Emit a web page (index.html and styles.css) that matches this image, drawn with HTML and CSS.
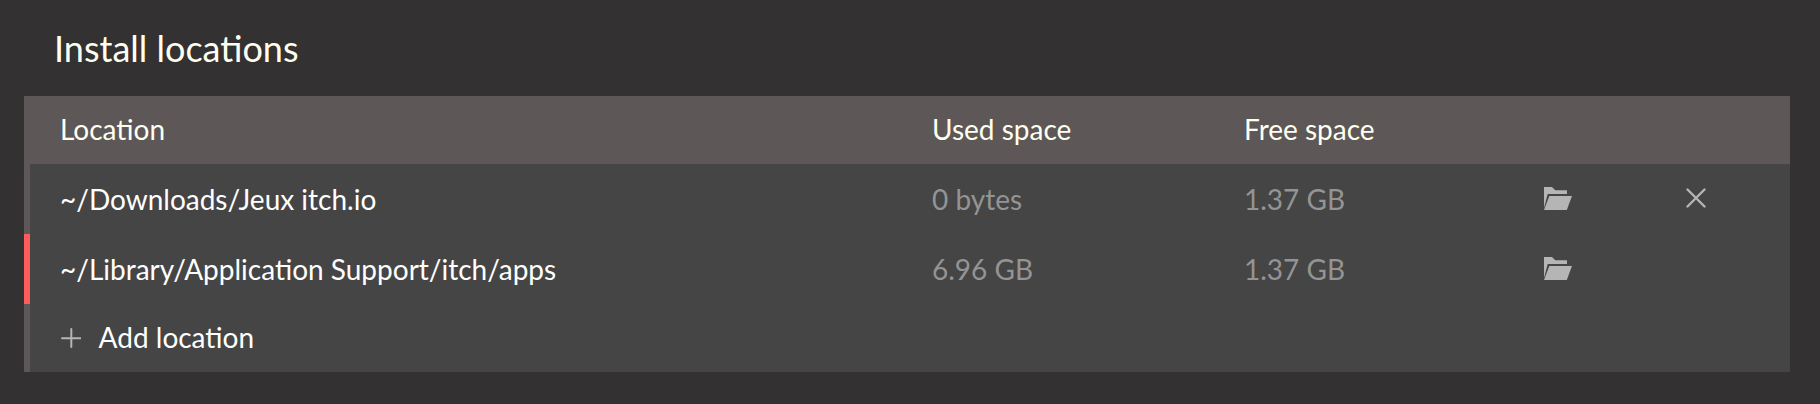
FILE: index.html
```html
<!DOCTYPE html>
<html lang="en">
<head>
    <meta charset="UTF-8">
    <meta name="viewport" content="width=device-width, initial-scale=1.0">
    <title>Install locations</title>
    <link rel="stylesheet" href="styles.css">
</head>
<body>
    <h2>Install locations</h2>
    <table class="locations">
        <tr class="header">
            <th class="path">Location</th>
            <th class="used">Used space</th>
            <th class="free">Free space</th>
            <th class="open"></th>
            <th class="remove"></th>
        </tr>
        <tr>
            <td class="path">~/Downloads/Jeux itch.io</td>
            <td class="space">0 bytes</td>
            <td class="space">1.37 GB</td>
            <td class="action">
                <svg class="icon folder" viewBox="0 0 28 23"><path d="M0 21V0h8l3.300 3.300H23V7H3.700z"/><path d="M5.300 9H28l-5.200 14H0z"/></svg>
            </td>
            <td class="action">
                <svg class="icon cross" viewBox="0 0 20 20"><path d="M1.500 1.500l17 17M18.500 1.500l-17 17"/></svg>
            </td>
        </tr>
        <tr class="default">
            <td class="path">~/Library/Application Support/itch/apps</td>
            <td class="space">6.96 GB</td>
            <td class="space">1.37 GB</td>
            <td class="action">
                <svg class="icon folder" viewBox="0 0 28 23"><path d="M0 21V0h8l3.300 3.300H23V7H3.700z"/><path d="M5.300 9H28l-5.200 14H0z"/></svg>
            </td>
            <td></td>
        </tr>
        <tr class="add">
            <td class="path" colspan="5">
                <div class="link">
                    <svg class="icon plus" viewBox="0 0 20 20"><path d="M10.300 1v18M1 10.300h18.500"/></svg>
                    <span>Add location</span>
                </div>
            </td>
        </tr>
    </table>
</body>
</html>
```
FILE: styles.css
```css
*{
    margin: 0;
    padding: 0;
    box-sizing: border-box;
}
body{
    height: 404px;
    background: #333131;
    color: #fffff0;
    font-family: Lato, sans-serif;
    font-size: 28px;
    overflow: hidden;
}
h2{
    height: 96px;
    padding-left: 54px;
    font-size: 36px;
    font-weight: 400;
    line-height: 96px;
}
.locations{
    width: 1766px;
    margin-left: 24px;
    table-layout: fixed;
    border-collapse: separate;
    border-spacing: 0;
    background: #454545;
}
.locations tr{
    height: 70px;
}
.locations th,
.locations td{
    text-align: left;
    font-weight: 400;
    white-space: nowrap;
}
.locations td{
    color: #fff;
}
.header{
    background: #5d5757;
}
.locations .header{
    height: 68px;
}
.locations .header th{
    padding-bottom: 2px;
}
.locations .path{
    width: 908px;
    padding-left: 30px;
    border-left: 6px solid #5d5757;
}
.locations .default .path{
    border-left-color: #ff5c5c;
}
.used{
    width: 312px;
}
.free{
    width: 300px;
}
.open{
    width: 142px;
}
.locations .space{
    color: #949494;
}
.icon{
    display: block;
    fill: none;
    stroke: #b5b5b5;
    stroke-width: 2;
    stroke-linecap: round;
}
.folder{
    width: 28px;
    height: 23px;
    margin-bottom: 1px;
    fill: #b5b5b5;
    stroke: none;
}
.cross,
.plus{
    width: 20px;
    height: 20px;
}
.cross{
    stroke-width: 2.4;
    margin-bottom: 2px;
}
.plus{
    margin-top: 2px;
}
.locations .add{
    height: 68px;
}
.locations .add .path{
    padding-bottom: 2px;
}
.link{
    display: flex;
    align-items: center;
    gap: 17.600px;
    padding-left: 1px;
}
```
